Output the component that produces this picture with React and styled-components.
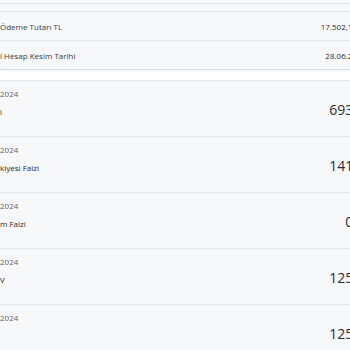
import React from 'react';
import styled, { createGlobalStyle } from 'styled-components';

const GlobalStyle = createGlobalStyle`
  html, body {
    margin: 0;
    padding: 0;
    overflow: hidden;
    background: #ffffff;
  }
  body {
    font-family: 'Open Sans', 'Noto Sans', sans-serif;
    color: #333;
  }
`;

const Page = styled.div`
  width: 390px;
`;

const SummaryCard = styled.section`
  background: #f7f8fa;
  border-bottom: 1px solid #dcdfe3;
  box-shadow: 0 1px 2px rgba(0, 0, 0, 0.05);
`;

const Strip = styled.div`
  height: ${props => props.h}px;
  border-bottom: 1px solid #e6e8eb;
`;

const SummaryRow = styled.div`
  height: 28px;
  display: flex;
  align-items: center;
  justify-content: space-between;
  padding-right: 33px;
  font-size: 8px;
  color: #383b40;
  & + & {
    border-top: 1px solid #e6e8eb;
  }
`;

const SummaryValue = styled.span`
  color: #2b2d31;
`;

const DetailCard = styled.section`
  margin-top: 10px;
  background: #f7f8fa;
  border-top: 1px solid #e6e8eb;
`;

const DetailRow = styled.div`
  height: 55px;
  display: flex;
  justify-content: space-between;
  padding-right: 17px;
  border-bottom: 1px solid #e6e8eb;
`;

const DetailInfo = styled.div`
  display: flex;
  flex-direction: column;
  padding-top: 8px;
  gap: 8px;
`;

const DetailDate = styled.span`
  font-size: 8px;
  line-height: 10px;
  color: #5f6268;
`;

const DetailLabel = styled.span`
  font-size: 8px;
  line-height: 10px;
  color: #26282c;
  min-height: 10px;
`;

const DetailAmount = styled.span`
  margin-top: 20px;
  font-size: 14px;
  line-height: 18px;
  color: #2b2d31;
`;

const summary = [
  { label: 'Ödeme Tutarı TL', value: '17.502,15' },
  { label: 'i Hesap Kesim Tarihi', value: '28.06.24' },
];

const details = [
  { label: 'i', amount: '693,45' },
  { label: 'kiyesi Faizi', amount: '141,22' },
  { label: 'm Faizi', amount: '0,00' },
  { label: 'V', amount: '125,30' },
  { label: '', amount: '125,30' },
];

const App = () => (
  <>
    <GlobalStyle />
    <Page>
      <SummaryCard>
        <Strip h={3} />
        <Strip h={7} />
        {summary.map(item => (
          <SummaryRow key={item.label}>
            <span>{item.label}</span>
            <SummaryValue>{item.value}</SummaryValue>
          </SummaryRow>
        ))}
      </SummaryCard>
      <DetailCard>
        {details.map((item, i) => (
          <DetailRow key={i}>
            <DetailInfo>
              <DetailDate>2024</DetailDate>
              <DetailLabel>{item.label}</DetailLabel>
            </DetailInfo>
            <DetailAmount>{item.amount}</DetailAmount>
          </DetailRow>
        ))}
      </DetailCard>
    </Page>
  </>
);

export default App;
